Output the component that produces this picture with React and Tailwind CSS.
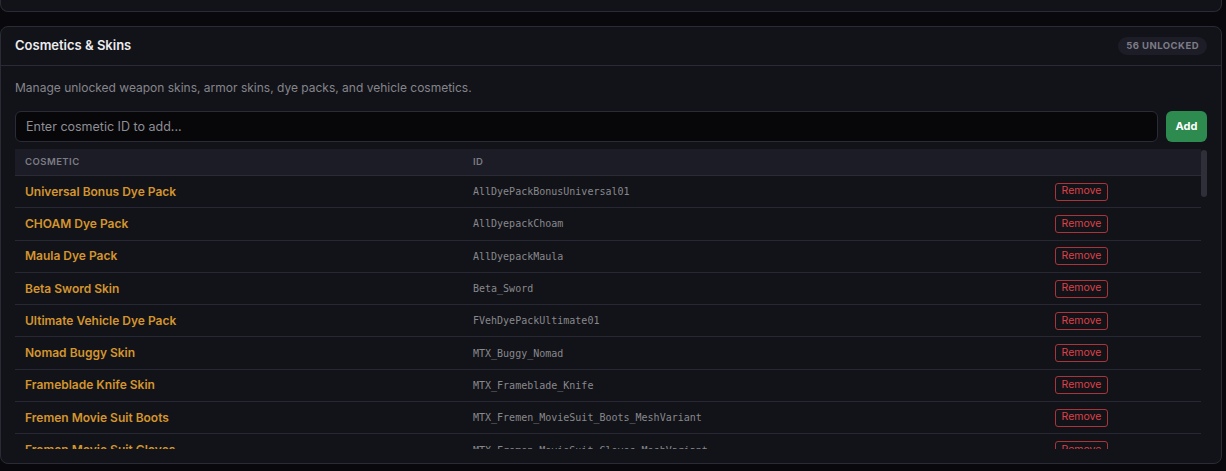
const cosmetics = [
  { name: 'Universal Bonus Dye Pack', id: 'AllDyePackBonusUniversal01' },
  { name: 'CHOAM Dye Pack', id: 'AllDyepackChoam' },
  { name: 'Maula Dye Pack', id: 'AllDyepackMaula' },
  { name: 'Beta Sword Skin', id: 'Beta_Sword' },
  { name: 'Ultimate Vehicle Dye Pack', id: 'FVehDyePackUltimate01' },
  { name: 'Nomad Buggy Skin', id: 'MTX_Buggy_Nomad' },
  { name: 'Frameblade Knife Skin', id: 'MTX_Frameblade_Knife' },
  { name: 'Fremen Movie Suit Boots', id: 'MTX_Fremen_MovieSuit_Boots_MeshVariant' },
  { name: 'Fremen Movie Suit Gloves', id: 'MTX_Fremen_MovieSuit_Gloves_MeshVariant' },
  { name: 'Fremen Movie Suit Helmet', id: 'MTX_Fremen_MovieSuit_Helmet_MeshVariant' },
];

const sans = "font-['Inter','Noto_Sans',sans-serif]";
const mono = "font-['DejaVu_Sans_Mono','Liberation_Mono',monospace]";

function CosmeticRow({ item }) {
  return (
    <div className="grid grid-cols-[458px_582px_1fr] items-center h-[32.3px] border-b border-[#272833]">
      <span className="pl-[10px] text-[12px] font-semibold text-[#d4952e]">{item.name}</span>
      <span className={`${mono} text-[10px] text-[#88888d]`}>{item.id}</span>
      <div className="flex items-center">
        <button className="flex items-center justify-center h-[18px] w-[53px] rounded-[3px] border border-[#a8353a] text-[10.5px] leading-none text-[#dd4148]">
          Remove
        </button>
      </div>
    </div>
  );
}

export default function App() {
  return (
    <div className={`${sans} min-h-[471px] bg-[#09090d] overflow-hidden`}>
      {/* previous section, scrolled mostly out of view */}
      <div className="w-[1222px] h-[13px] -mt-[1px] rounded-b-[8px] border border-t-0 border-[#2a2b36] bg-[#121318]" />

      <section className="w-[1222px] mt-[14px] rounded-[8px] border border-[#2a2b36] bg-[#121318]">
        {/* Header */}
        <div className="flex items-center justify-between h-[39px] px-[14px] border-b border-[#2a2b36]">
          <h2 className="text-[13px] font-semibold text-[#ececef]">Cosmetics &amp; Skins</h2>
          <span className="rounded-full bg-[#1c1d26] px-[8px] py-[2px] text-[9.5px] font-bold tracking-wider text-[#7c7c86]">
            56 UNLOCKED
          </span>
        </div>

        {/* Body */}
        <div className="px-[14px] pt-[13px] pb-[14px]">
          <p className="text-[12px] leading-[18px] text-[#85858c]">
            Manage unlocked weapon skins, armor skins, dye packs, and vehicle cosmetics.
          </p>

          <div className="flex gap-[8px] mt-[14px]">
            <input
              placeholder="Enter cosmetic ID to add..."
              className="flex-1 h-[31px] rounded-[6px] border border-[#2a2b36] bg-[#07070a] px-[10px] text-[12.5px] text-[#d0d0d4] placeholder:text-[#8e8e95] outline-none"
            />
            <button className="w-[41px] h-[31px] rounded-[6px] bg-[#2e8b4f] text-[11px] font-bold text-white">
              Add
            </button>
          </div>

          {/* Table */}
          <div className="flex mt-[7px] h-[300px] overflow-hidden">
            <div className="flex-1">
              <div className="grid grid-cols-[458px_582px_1fr] items-center h-[27px] bg-[#1b1c25] border-b border-[#2a2b36] text-[9.5px] font-semibold tracking-wider text-[#7c7c86]">
                <span className="pl-[10px]">COSMETIC</span>
                <span>ID</span>
                <span />
              </div>
              {cosmetics.map((item) => (
                <CosmeticRow key={item.id} item={item} />
              ))}
            </div>
            {/* scrollbar */}
            <div className="w-[6px] pt-[1px]">
              <div className="h-[47px] rounded-full bg-[#2e2f39]" />
            </div>
          </div>
        </div>
      </section>
    </div>
  );
}
